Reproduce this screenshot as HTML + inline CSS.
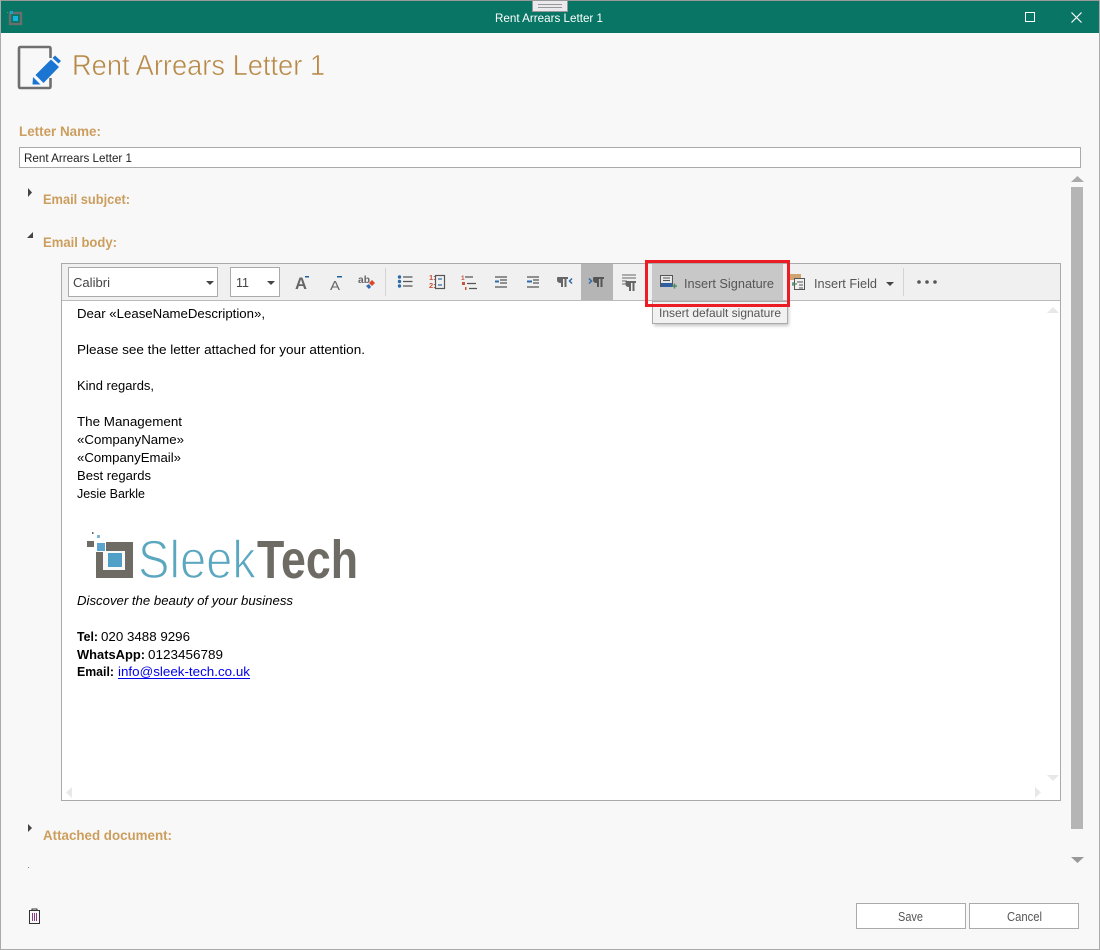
<!DOCTYPE html>
<html lang="en"><head><meta charset="utf-8"><title>Rent Arrears Letter 1</title>
<style>
html,body{margin:0;padding:0;background:#f8f8f8}
svg{display:block}
text{font-family:"Liberation Sans",sans-serif}
.b{font-size:13px;fill:#000}
.h{font-size:14px;font-weight:bold;fill:#cc9e5e}
.t{font-size:13px;fill:#555}
</style></head><body>
<svg xmlns="http://www.w3.org/2000/svg" width="1100" height="950" viewBox="0 0 1100 950">
<defs><filter id="sh" x="-10%" y="-20%" width="120%" height="150%"><feGaussianBlur stdDeviation="1.500"/></filter></defs>
<rect width="1100" height="950" fill="#f8f8f8"/>
<!-- title bar -->
<rect x="0" y="0" width="1100" height="33" fill="#087565"/>
<rect x="0" y="0" width="1100" height="1" fill="#999"/>
<rect x="10" y="13" width="11" height="11" fill="none" stroke="#6a6f6e" stroke-width="2.400"/>
<rect x="13" y="16" width="5" height="5" fill="#12b5dc"/>
<rect x="10" y="11" width="3" height="3" fill="#12a5c4"/>
<rect x="7" y="12" width="1" height="1" fill="#2a9"/>
<rect x="532.500" y="0.500" width="35" height="11" fill="#e9e9ee" stroke="#999"/>
<path d="M538 4.500h24M538 7.500h24" stroke="#999" stroke-width="1"/>
<text x="495" y="22" font-size="12" fill="#fff" textLength="108" lengthAdjust="spacingAndGlyphs">Rent Arrears Letter 1</text>
<rect x="1025.500" y="12.500" width="9" height="9" fill="none" stroke="#fff" stroke-width="1"/>
<path d="M1071.500 12.500l10 10M1081.500 12.500l-10 10" stroke="#fff" stroke-width="1.200" fill="none"/>
<!-- window borders -->
<rect x="0" y="0" width="1" height="950" fill="#aaa"/>
<rect x="1099" y="0" width="1" height="950" fill="#aaa"/>
<rect x="0" y="949" width="1100" height="1" fill="#aaa"/>
<!-- header icon -->
<path d="M50.500 58V48.500q0-1.500-1.500-1.500H20.500q-1.500 0-1.500 1.500v38q0 1.500 1.500 1.500H49q1.500 0 1.500-1.500V78" fill="none" stroke="#6f6f6f" stroke-width="2.600"/>
<path d="M35.500 75L51 59.500l8 7.500L43.500 83z" fill="#1a76d2"/>
<path d="M33 77l7.500 7.500-8 0z" fill="#1a76d2"/>
<path d="M52.500 58l2.500-2.500 6 5.500-2.500 2.500z" fill="#1a76d2"/>
<text x="72" y="75" font-size="29" fill="#b88a48" stroke="#f8f8f8" stroke-width="0.550" textLength="253" lengthAdjust="spacingAndGlyphs">Rent Arrears Letter 1</text>
<!-- letter name -->
<text x="19" y="136" class="h" textLength="82" lengthAdjust="spacingAndGlyphs">Letter Name:</text>
<rect x="19.500" y="147.500" width="1061" height="20" fill="#fff" stroke="#aaa"/>
<text x="24" y="162" font-size="11.500" fill="#222" textLength="108" lengthAdjust="spacingAndGlyphs">Rent Arrears Letter 1</text>
<!-- sections -->
<path d="M28 188v9l4-4.500z" fill="#444"/>
<text x="43" y="204" class="h" textLength="87" lengthAdjust="spacingAndGlyphs">Email subjcet:</text>
<path d="M33 232v6h-6z" fill="#444"/>
<text x="43" y="247" class="h" textLength="74" lengthAdjust="spacingAndGlyphs">Email body:</text>
<path d="M28 824v8l4-4z" fill="#444"/>
<text x="43" y="840" class="h" textLength="129" lengthAdjust="spacingAndGlyphs">Attached document:</text>
<rect x="28" y="867" width="1" height="1" fill="#888"/>
<!-- outer scrollbar -->
<path d="M1071 182l6.500-6 6.500 6z" fill="#aaa"/>
<rect x="1071" y="187" width="12" height="642" fill="#b5b5b5"/>
<path d="M1071 857h13l-6.500 6z" fill="#999"/>
<!-- editor -->
<rect x="61.500" y="263.500" width="999" height="537" fill="#fff" stroke="#aaa"/>
<rect x="62" y="264" width="998" height="36" fill="#f0f0f0"/>
<rect x="62" y="300" width="998" height="1" fill="#bbb"/>
<!-- font combo -->
<rect x="68.500" y="267.500" width="149" height="29" fill="#fff" stroke="#aaa"/>
<text x="73" y="287" font-size="12.500" fill="#444" textLength="37" lengthAdjust="spacingAndGlyphs">Calibri</text>
<path d="M206 281h8l-4 4z" fill="#444"/>
<rect x="230.500" y="267.500" width="49" height="29" fill="#fff" stroke="#aaa"/>
<text x="236" y="287" font-size="12.500" fill="#444" textLength="13" lengthAdjust="spacingAndGlyphs">11</text>
<path d="M267 281h8l-4 4z" fill="#444"/>
<!-- font icons -->
<text x="295" y="289" font-size="17" fill="#666" font-weight="bold" textLength="12" lengthAdjust="spacingAndGlyphs">A</text>
<rect x="305" y="276" width="4" height="1.500" fill="#1f5f9e"/>
<text x="330" y="290" font-size="13" fill="#666" textLength="10" lengthAdjust="spacingAndGlyphs">A</text>
<rect x="337" y="276" width="5" height="1.500" fill="#1f5f9e"/>
<text x="358" y="283" font-size="10" font-weight="bold" fill="#666" textLength="12" lengthAdjust="spacingAndGlyphs">ab</text>
<path d="M369 283l3-3 3 3-3 3z" fill="#d9472a"/>
<path d="M366 286l3-2 2 3-2 2z" fill="#2b6cb0"/>
<rect x="385" y="268" width="1" height="28" fill="#d4d4d4"/>
<!-- list icons -->
<g fill="#2b6ca8"><circle cx="399.500" cy="277" r="1.700"/><circle cx="399.500" cy="281.500" r="1.700"/><circle cx="399.500" cy="286" r="1.700"/></g>
<path d="M403 277h9.500M403 281.500h9.500M403 286h9.500" stroke="#555" stroke-width="1.200"/>
<text x="429" y="280" font-size="7.500" font-weight="bold" fill="#c8523a">1:</text>
<text x="429" y="288" font-size="7.500" font-weight="bold" fill="#c8523a">2:</text>
<rect x="435.500" y="275.500" width="9" height="13" fill="none" stroke="#555" stroke-width="1.200"/>
<path d="M438 279h4M438 285h4" stroke="#2b6ca8" stroke-width="1.200"/>
<text x="461" y="280" font-size="6.500" font-weight="bold" fill="#c8523a">1</text>
<rect x="462" y="282" width="3" height="3" fill="#c8523a"/>
<rect x="465" y="287" width="1.500" height="3" fill="#c8523a"/>
<path d="M465 277h8M467 283.500h9M469 288.500h8" stroke="#555" stroke-width="1.200"/>
<path d="M495 277h12M500 280h7M500 283h7M495 287h12" stroke="#555" stroke-width="1.200"/>
<path d="M495 281.500h4" stroke="#2b6ca8" stroke-width="2"/>
<path d="M527 277h12M533 280h6M533 283h6M527 287h12" stroke="#555" stroke-width="1.200"/>
<path d="M527 281.500h5" stroke="#2b6ca8" stroke-width="2"/>
<path d="M557 277h11v2h-1.500v8h-2v-8h-1.500v8h-2v-4q-4 0-4-3q0-3 0.500-3z" fill="#666"/>
<path d="M572 278.500l-2.500 2.500 2.500 2.500" fill="none" stroke="#2b6ca8" stroke-width="1.500"/>
<rect x="581" y="264" width="32" height="36" fill="#b5b5b5"/>
<path d="M589 278.500l2.500 2.500-2.500 2.500" fill="none" stroke="#2b6ca8" stroke-width="1.500"/>
<path d="M593 277h11v2h-1.500v8h-2v-8h-1.500v8h-2v-4q-4 0-4-3q0-3 0.500-3z" fill="#555"/>
<path d="M622 275h14M622 278h14M622 281h5M622 284h5" stroke="#666" stroke-width="1.100"/>
<path d="M626 281h10v2h-1.500v8h-2v-8h-1.500v8h-2v-4q-3.500 0-3.500-3q0-3 0.500-3z" fill="#666"/>
<!-- insert signature -->
<rect x="652" y="264" width="131" height="36" fill="#c8c8c8"/>
<rect x="660.500" y="275.500" width="12" height="11" fill="#e6e6e6" stroke="#555"/>
<path d="M663 278h7M663 280.500h7" stroke="#555"/>
<rect x="661" y="283" width="11" height="4" fill="#2f5f9e"/>
<path d="M672 286h5M674.500 283.500v5" stroke="#4d8a6a" stroke-width="1.500"/>
<text x="684" y="288" class="t" textLength="90" lengthAdjust="spacingAndGlyphs">Insert Signature</text>
<!-- insert field -->
<rect x="790" y="274" width="11" height="6" fill="#d0a470"/>
<rect x="794.500" y="278.500" width="10" height="11" fill="#f0f0f0" stroke="#555"/>
<path d="M797 282h6M799 285h4M799 288h4" stroke="#555"/>
<path d="M792 284h5M793 282v4" stroke="#4d8a6a" stroke-width="1.200"/>
<text x="814" y="288" class="t" textLength="63" lengthAdjust="spacingAndGlyphs">Insert Field</text>
<path d="M886 282h8l-4 4z" fill="#444"/>
<rect x="903" y="268" width="1" height="28" fill="#d4d4d4"/>
<circle cx="919" cy="282" r="1.800" fill="#555"/><circle cx="927" cy="282" r="1.800" fill="#555"/><circle cx="935" cy="282" r="1.800" fill="#555"/>
<!-- editor body -->
<text x="77" y="318" class="b" textLength="188" lengthAdjust="spacingAndGlyphs">Dear «LeaseNameDescription»,</text>
<text x="77" y="354" class="b" textLength="288" lengthAdjust="spacingAndGlyphs">Please see the letter attached for your attention.</text>
<text x="77" y="390" class="b" textLength="77" lengthAdjust="spacingAndGlyphs">Kind regards,</text>
<text x="77" y="426" class="b" textLength="105" lengthAdjust="spacingAndGlyphs">The Management</text>
<text x="77" y="444" class="b" textLength="107" lengthAdjust="spacingAndGlyphs">«CompanyName»</text>
<text x="77" y="462" class="b" textLength="104" lengthAdjust="spacingAndGlyphs">«CompanyEmail»</text>
<text x="77" y="480" class="b" textLength="74" lengthAdjust="spacingAndGlyphs">Best regards</text>
<text x="77" y="498" class="b" textLength="68" lengthAdjust="spacingAndGlyphs">Jesie Barkle</text>
<!-- logo -->
<rect x="92" y="532" width="1.500" height="2" fill="#666"/>
<rect x="97" y="535" width="3" height="3" fill="#7fb6d4"/>
<rect x="87" y="541" width="7" height="6" fill="#6e6a64"/>
<rect x="97" y="543" width="8" height="8" fill="#5ba4cf"/>
<path d="M96 552h10v-10h27v36H96z" fill="#6e6a64"/>
<rect x="103" y="551" width="22" height="19" fill="#f8f8f8"/>
<rect x="108" y="553" width="14" height="14" fill="#4f9fc6"/>
<text x="138" y="578" font-size="54" fill="#5ba7c0" textLength="118" lengthAdjust="spacingAndGlyphs" stroke="#fff" stroke-width="1.400">Sleek</text>
<text x="257" y="578" font-size="54" font-weight="bold" fill="#6e6a64" textLength="101" lengthAdjust="spacingAndGlyphs">Tech</text>
<text x="77" y="605" class="b" font-style="italic" textLength="216" lengthAdjust="spacingAndGlyphs">Discover the beauty of your business</text>
<text x="77" y="641" class="b" font-weight="bold" textLength="21" lengthAdjust="spacingAndGlyphs">Tel:</text>
<text x="101" y="641" class="b" textLength="89" lengthAdjust="spacingAndGlyphs">020 3488 9296</text>
<text x="77" y="659" class="b" font-weight="bold" textLength="68" lengthAdjust="spacingAndGlyphs">WhatsApp:</text>
<text x="148" y="659" class="b" textLength="75" lengthAdjust="spacingAndGlyphs">0123456789</text>
<text x="77" y="676" class="b" font-weight="bold" textLength="37" lengthAdjust="spacingAndGlyphs">Email:</text>
<text x="118" y="676" class="b" style="fill:#0000ee" textLength="132" lengthAdjust="spacingAndGlyphs">info@sleek-tech.co.uk</text>
<rect x="118" y="678" width="132" height="1" fill="#0000ee"/>
<!-- inner scroll arrows -->
<path d="M1047 313l6-6 6 6z" fill="#e8e8e8"/>
<path d="M1047 775h12l-6 6z" fill="#e8e8e8"/>
<path d="M72 787v11l-6-5.500z" fill="#e8e8e8"/>
<path d="M1035 787v11l6-5.500z" fill="#e8e8e8"/>
<!-- tooltip -->
<rect x="654" y="304" width="135" height="22" fill="#000" opacity="0.220" filter="url(#sh)"/>
<rect x="652.500" y="301.500" width="135" height="22" fill="#f1f1f1" stroke="#aaa"/>
<text x="659" y="317" font-size="12" fill="#555" textLength="122" lengthAdjust="spacingAndGlyphs">Insert default signature</text>
<!-- red box -->
<rect x="646.500" y="261.500" width="142" height="44" fill="none" stroke="#ec1c24" stroke-width="3"/>
<!-- trash -->
<path d="M29 910.500h11M32 910.500v-1.500h5v1.500" fill="none" stroke="#333" stroke-width="1"/>
<rect x="29.500" y="910.500" width="10" height="13" fill="none" stroke="#333"/>
<path d="M32.500 913v8M34.500 913v8M36.500 913v8" stroke="#8a3a8a" stroke-width="1"/>
<!-- buttons -->
<rect x="856.500" y="903.500" width="109" height="25" fill="#fff" stroke="#aaa"/>
<text x="898" y="921" font-size="12.500" fill="#555" textLength="25" lengthAdjust="spacingAndGlyphs">Save</text>
<rect x="969.500" y="903.500" width="109" height="25" fill="#fff" stroke="#aaa"/>
<text x="1007" y="921" font-size="12.500" fill="#555" textLength="35" lengthAdjust="spacingAndGlyphs">Cancel</text>
</svg>
</body></html>
